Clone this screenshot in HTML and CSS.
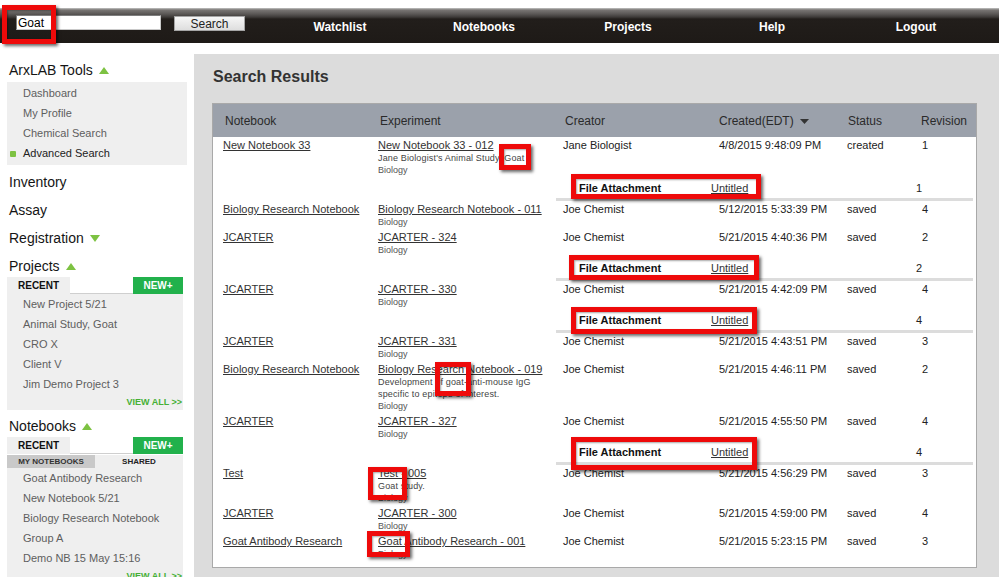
FILE: index.html
```html
<!DOCTYPE html>
<html>
<head>
<meta charset="utf-8">
<title>ArxLAB - Search Results</title>
<link rel="stylesheet" href="styles.css">
</head>
<body>
<header class="topbar">
  <div class="search">
    <input class="search-input" type="text" value="Goat">
    <button class="search-btn" type="button">Search</button>
  </div>
  <nav class="nav">
    <a href="#">Watchlist</a>
    <a href="#">Notebooks</a>
    <a href="#">Projects</a>
    <a href="#">Help</a>
    <a href="#">Logout</a>
  </nav>
</header>

<div class="layout">
  <aside class="sidebar">
    <div class="side-h first">ArxLAB Tools <svg class="tri" width="10" height="7" viewBox="0 0 10 7"><path d="M5 0L10 7H0Z"/></svg></div>
    <div class="tools">
      <div class="item">Dashboard</div>
      <div class="item">My Profile</div>
      <div class="item">Chemical Search</div>
      <div class="item active">Advanced Search</div>
    </div>
    <div class="side-h">Inventory</div>
    <div class="side-h">Assay</div>
    <div class="side-h">Registration <svg class="tri" width="10" height="7" viewBox="0 0 10 7"><path d="M0 0H10L5 7Z"/></svg></div>
    <div class="side-h">Projects <svg class="tri" width="10" height="7" viewBox="0 0 10 7"><path d="M5 0L10 7H0Z"/></svg></div>
    <div class="panel-s">
      <div class="tabs">
        <div class="tab">RECENT</div>
        <div class="tab-space"></div>
        <div class="new-btn">NEW+</div>
      </div>
      <div class="list">
        <div class="item">New Project 5/21</div>
        <div class="item">Animal Study, Goat</div>
        <div class="item">CRO X</div>
        <div class="item">Client V</div>
        <div class="item">Jim Demo Project 3</div>
        <div class="view-all">VIEW ALL &gt;&gt;</div>
      </div>
    </div>
    <div class="side-h after-panel">Notebooks <svg class="tri" width="10" height="7" viewBox="0 0 10 7"><path d="M5 0L10 7H0Z"/></svg></div>
    <div class="panel-s">
      <div class="tabs">
        <div class="tab">RECENT</div>
        <div class="tab-space"></div>
        <div class="new-btn">NEW+</div>
      </div>
      <div class="subtabs">
        <div class="subtab sel">MY NOTEBOOKS</div>
        <div class="subtab">SHARED</div>
      </div>
      <div class="list">
        <div class="item">Goat Antibody Research</div>
        <div class="item">New Notebook 5/21</div>
        <div class="item">Biology Research Notebook</div>
        <div class="item">Group A</div>
        <div class="item">Demo NB 15 May 15:16</div>
        <div class="view-all">VIEW ALL &gt;&gt;</div>
      </div>
    </div>
  </aside>

  <main class="main">
    <h1 class="title">Search Results</h1>
    <div class="panel">
      <table class="results">
        <colgroup>
          <col class="c1"><col class="c2"><col class="c3"><col class="c4"><col class="c5"><col class="c6">
        </colgroup>
        <thead>
          <tr>
            <th>Notebook</th>
            <th>Experiment</th>
            <th>Creator</th>
            <th>Created(EDT) <svg class="sort" width="9" height="5" viewBox="0 0 9 5"><path d="M0 0H9L4.5 5Z"/></svg></th>
            <th>Status</th>
            <th>Revision</th>
          </tr>
        </thead>
        <tbody>
          <tr class="row">
            <td><a href="#">New Notebook 33</a></td>
            <td><a href="#">New Notebook 33 - 012</a><div class="desc">Jane Biologist's Animal Study, Goat</div><div class="cat">Biology</div></td>
            <td>Jane Biologist</td><td>4/8/2015 9:48:09 PM</td><td>created</td><td>1</td>
          </tr>
          <tr class="att">
            <td colspan="2"></td>
            <td colspan="4"><div class="att-box"><b>File Attachment</b><a href="#">Untitled</a><span>1</span></div></td>
          </tr>
          <tr class="row">
            <td><a href="#">Biology Research Notebook</a></td>
            <td><a href="#">Biology Research Notebook - 011</a><div class="cat">Biology</div></td>
            <td>Joe Chemist</td><td>5/12/2015 5:33:39 PM</td><td>saved</td><td>4</td>
          </tr>
          <tr class="row">
            <td><a href="#">JCARTER</a></td>
            <td><a href="#">JCARTER - 324</a><div class="cat">Biology</div></td>
            <td>Joe Chemist</td><td>5/21/2015 4:40:36 PM</td><td>saved</td><td>2</td>
          </tr>
          <tr class="att">
            <td colspan="2"></td>
            <td colspan="4"><div class="att-box"><b>File Attachment</b><a href="#">Untitled</a><span>2</span></div></td>
          </tr>
          <tr class="row">
            <td><a href="#">JCARTER</a></td>
            <td><a href="#">JCARTER - 330</a><div class="cat">Biology</div></td>
            <td>Joe Chemist</td><td>5/21/2015 4:42:09 PM</td><td>saved</td><td>4</td>
          </tr>
          <tr class="att">
            <td colspan="2"></td>
            <td colspan="4"><div class="att-box"><b>File Attachment</b><a href="#">Untitled</a><span>4</span></div></td>
          </tr>
          <tr class="row">
            <td><a href="#">JCARTER</a></td>
            <td><a href="#">JCARTER - 331</a><div class="cat">Biology</div></td>
            <td>Joe Chemist</td><td>5/21/2015 4:43:51 PM</td><td>saved</td><td>3</td>
          </tr>
          <tr class="row">
            <td><a href="#">Biology Research Notebook</a></td>
            <td><a href="#">Biology Research Notebook - 019</a><div class="desc">Development of goat-anti-mouse IgG</div><div class="desc">specific to epitope of interest.</div><div class="cat">Biology</div></td>
            <td>Joe Chemist</td><td>5/21/2015 4:46:11 PM</td><td>saved</td><td>2</td>
          </tr>
          <tr class="row">
            <td><a href="#">JCARTER</a></td>
            <td><a href="#">JCARTER - 327</a><div class="cat">Biology</div></td>
            <td>Joe Chemist</td><td>5/21/2015 4:55:50 PM</td><td>saved</td><td>4</td>
          </tr>
          <tr class="att">
            <td colspan="2"></td>
            <td colspan="4"><div class="att-box"><b>File Attachment</b><a href="#">Untitled</a><span>4</span></div></td>
          </tr>
          <tr class="row">
            <td><a href="#">Test</a></td>
            <td><a href="#">Test - 005</a><div class="desc">Goat study.</div><div class="cat">Biology</div></td>
            <td>Joe Chemist</td><td>5/21/2015 4:56:29 PM</td><td>saved</td><td>3</td>
          </tr>
          <tr class="row">
            <td><a href="#">JCARTER</a></td>
            <td><a href="#">JCARTER - 300</a><div class="cat">Biology</div></td>
            <td>Joe Chemist</td><td>5/21/2015 4:59:00 PM</td><td>saved</td><td>4</td>
          </tr>
          <tr class="row">
            <td><a href="#">Goat Antibody Research</a></td>
            <td><a href="#">Goat Antibody Research - 001</a><div class="cat">Biology</div></td>
            <td>Joe Chemist</td><td>5/21/2015 5:23:15 PM</td><td>saved</td><td>3</td>
          </tr>
        </tbody>
      </table>
    </div>
  </main>
</div>

<div class="marks">
  <div class="mark m1"></div>
  <div class="mark m2"></div>
  <div class="mark m3"></div>
  <div class="mark m4"></div>
  <div class="mark m5"></div>
  <div class="mark m6"></div>
  <div class="mark m7"></div>
  <div class="mark m8"></div>
  <div class="mark m9"></div>
</div>
</body>
</html>
```

FILE: styles.css
```css
html, body {
  margin: 0;
  height: 100%;
  overflow: hidden;
}
body {
  position: relative;
  font-family: "Liberation Sans", Arial, sans-serif;
  background: #fff;
  color: #222;
}

/* ---------- top bar ---------- */
.topbar {
  margin-top: 8px;
  height: 35px;
  display: flex;
  align-items: flex-start;
  background: linear-gradient(to bottom, #c4c4c4 0, #787573 2px, #5a5755 6px, #3e3b39 9px, #221e1b 11px, #1e1a17 100%);
}
.search {
  display: flex;
  align-items: flex-start;
  gap: 13px;
  padding: 7px 0 0 16px;
}
.search-input {
  width: 145px;
  height: 15px;
  box-sizing: border-box;
  margin: 0;
  padding: 0 1px;
  border: 1px solid #7e7e7e;
  border-right-color: #c9c9c9;
  border-bottom-color: #c9c9c9;
  background: #fff;
  font: 12px "Liberation Sans", Arial, sans-serif;
  color: #000;
  outline: none;
}
.search-btn {
  width: 71px;
  height: 15px;
  margin: 1px 0 0;
  padding: 0;
  box-sizing: border-box;
  border: 1px solid #a5a5a5;
  background: linear-gradient(#f6f6f6, #dedede);
  font: 12px/12px "Liberation Sans", Arial, sans-serif;
  color: #222;
}
.nav {
  display: flex;
  margin-left: 23px;
}
.nav a {
  width: 144px;
  text-align: center;
  padding-top: 12px;
  font-size: 12px;
  line-height: 14px;
  font-weight: bold;
  color: #fff;
  text-decoration: none;
}

/* ---------- layout ---------- */
.layout {
  display: flex;
  margin-top: 11px;
  height: calc(100% - 54px);
}
.sidebar {
  width: 194px;
  flex: none;
  box-sizing: border-box;
  padding: 5px 0 0 7px;
  background: #fff;
}
.main {
  flex: 1;
  background: #dcdcdc;
  padding: 13px 0 0 18px;
}

/* ---------- sidebar ---------- */
.side-h {
  display: flex;
  align-items: center;
  gap: 6px;
  margin-top: 6px;
  padding-left: 2px;
  font-size: 14px;
  line-height: 22px;
  color: #151515;
}
.side-h.first {
  margin-top: 0;
}
.side-h.after-panel {
  margin-top: 5px;
}
.tri {
  fill: #7dc242;
}
.tools {
  width: 180px;
  margin-top: 1px;
  padding: 1px 0 2px;
  background: #efefef;
}
.item {
  padding-left: 16px;
  font-size: 11px;
  line-height: 20px;
  color: #5e5e5e;
  white-space: nowrap;
}
.item.active {
  color: #222;
}
.item.active::before {
  content: "";
  display: inline-block;
  width: 6px;
  height: 6px;
  margin: 0 7px 0 -13px;
  border-radius: 1px;
  background: #7dc242;
  vertical-align: 0;
}
.panel-s {
  width: 176px;
}
.tabs {
  display: flex;
  height: 17px;
}
.tab {
  width: 63px;
  box-sizing: border-box;
  padding-left: 11px;
  background: #efefef;
  font-size: 10px;
  font-weight: bold;
  line-height: 17px;
  color: #111;
}
.tab-space {
  flex: 1;
  border-bottom: 1px solid #cfcfcf;
}
.new-btn {
  width: 50px;
  background: #22b14c;
  color: #fff;
  font-size: 10px;
  font-weight: bold;
  line-height: 17px;
  text-align: center;
}
.list {
  background: #efefef;
}
.view-all {
  text-align: right;
  padding-right: 1px;
  font-size: 9px;
  font-weight: bold;
  line-height: 16px;
  color: #45b035;
}
.subtabs {
  display: grid;
  grid-template-columns: 88px 88px;
  margin-top: 1px;
  background: #efefef;
}
.subtab {
  font-size: 8px;
  font-weight: bold;
  line-height: 13px;
  text-align: center;
  color: #222;
}
.subtab.sel {
  background: #c9c9c9;
  color: #333;
}

/* ---------- main ---------- */
.title {
  margin: 0 0 16px 1px;
  font-size: 16px;
  line-height: 20px;
  font-weight: bold;
  color: #333;
}
.panel {
  width: 765px;
  box-sizing: border-box;
  border: 1px solid #a9a9a9;
  background: #fff;
  padding-bottom: 6px;
}
.results {
  width: 100%;
  border-collapse: collapse;
  table-layout: fixed;
}
.c1 { width: 155px; }
.c2 { width: 185px; }
.c3 { width: 156px; }
.c4 { width: 128px; }
.c5 { width: 75px; }
.c6 { width: 64px; }

.results th {
  height: 33px;
  padding: 0 0 0 12px;
  background: #9ba1ab;
  text-align: left;
  font-size: 12px;
  font-weight: normal;
  color: #2a2a2a;
  white-space: nowrap;
}
.results th:nth-child(4) {
  padding-left: 10px;
}
.results th:nth-child(5) {
  padding-left: 11px;
}
.results th:nth-child(6) {
  padding-left: 9px;
}
.sort {
  fill: #333;
  margin-left: 3px;
  vertical-align: 1px;
}
.row td {
  padding: 1px 0 0 10px;
  vertical-align: top;
  font-size: 11px;
  line-height: 14px;
  color: #222;
  white-space: nowrap;
}
.results a {
  color: #333;
  text-decoration: underline;
}
.desc {
  font-size: 9px;
  line-height: 12px;
  letter-spacing: 0.15px;
  color: #444;
}
.cat {
  font-size: 9px;
  line-height: 13px;
  color: #555;
}
.att td {
  padding: 0;
}
.att-box {
  display: grid;
  grid-template-columns: 132px 205px auto;
  margin: 0 3px;
  padding: 4px 0 3px 23px;
  border-bottom: 3px solid #dcdcdc;
  font-size: 11px;
  line-height: 14px;
  color: #222;
}
.att-box b {
  color: #111;
}

/* ---------- annotation boxes ---------- */
.mark {
  position: absolute;
  box-sizing: border-box;
  border: 5px solid #ee0a0a;
  box-shadow: 2px 2px 3px rgba(0, 0, 0, 0.6), inset 1px 1px 2px rgba(0, 0, 0, 0.35);
}
.m1 { left: 2px;   top: 5px;   width: 54px;  height: 39px; }
.m2 { left: 499px; top: 144px; width: 32px;  height: 26px; }
.m3 { left: 571px; top: 174px; width: 190px; height: 25px; }
.m4 { left: 569px; top: 255px; width: 190px; height: 25px; }
.m5 { left: 571px; top: 307px; width: 186px; height: 27px; }
.m6 { left: 435px; top: 362px; width: 36px;  height: 34px; }
.m7 { left: 571px; top: 437px; width: 186px; height: 33px; }
.m8 { left: 368px; top: 467px; width: 39px;  height: 33px; }
.m9 { left: 367px; top: 531px; width: 43px;  height: 26px; }
```
